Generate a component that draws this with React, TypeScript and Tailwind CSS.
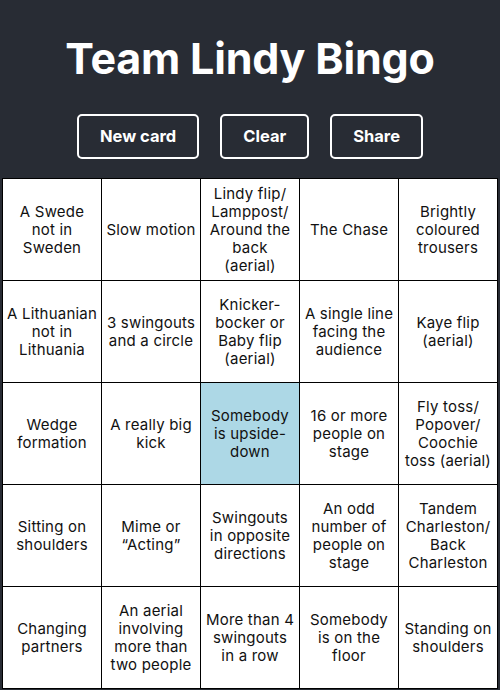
import React from "react";

const cells: string[][] = [
  ["A Swede", "not in", "Sweden"],
  ["Slow motion"],
  ["Lindy flip/", "Lamppost/", "Around the", "back", "(aerial)"],
  ["The Chase"],
  ["Brightly", "coloured", "trousers"],
  ["A Lithuanian", "not in", "Lithuania"],
  ["3 swingouts", "and a circle"],
  ["Knicker-", "bocker or", "Baby flip", "(aerial)"],
  ["A single line", "facing the", "audience"],
  ["Kaye flip", "(aerial)"],
  ["Wedge", "formation"],
  ["A really big", "kick"],
  ["Somebody", "is upside-", "down"],
  ["16 or more", "people on", "stage"],
  ["Fly toss/", "Popover/", "Coochie", "toss (aerial)"],
  ["Sitting on", "shoulders"],
  ["Mime or", "\u201CActing\u201D"],
  ["Swingouts", "in opposite", "directions"],
  ["An odd", "number of", "people on", "stage"],
  ["Tandem", "Charleston/", "Back", "Charleston"],
  ["Changing", "partners"],
  ["An aerial", "involving", "more than", "two people"],
  ["More than 4", "swingouts", "in a row"],
  ["Somebody", "is on the", "floor"],
  ["Standing on", "shoulders"],
];

export default function App() {
  return (
    <div
      className="w-[500px] bg-white"
      style={{ fontFamily: "Inter, 'Noto Sans', sans-serif" }}
    >
      <div className="bg-[#282c34] px-[2px] pb-[1px]">
        <h1 className="pt-[36px] text-center text-[43px] leading-[44px] font-bold text-white tracking-[-0.2px]">
          Team Lindy Bingo
        </h1>
        <div className="mt-[34px] flex justify-center gap-[21px]">
          {["New card", "Clear", "Share"].map((t) => (
            <button
              key={t}
              className="flex h-[45px] items-center rounded-[5px] border-2 border-white bg-transparent px-[21px] text-[16.5px] font-bold text-white"
            >
              {t}
            </button>
          ))}
        </div>
        <div className="mt-[19px] grid grid-cols-5 border-l border-t border-black bg-white">
          {cells.map((lines, i) => (
            <div
              key={i}
              className={`flex h-[102px] flex-col items-center justify-center border-b border-r border-black text-center text-[15px] leading-[18px] tracking-[0.2px] whitespace-nowrap text-[#111] ${
                i === 12 ? "bg-[#add8e6]" : "bg-white"
              }`}
            >
              {lines.map((l, j) => (
                <span key={j}>{l}</span>
              ))}
            </div>
          ))}
        </div>
      </div>
    </div>
  );
}
